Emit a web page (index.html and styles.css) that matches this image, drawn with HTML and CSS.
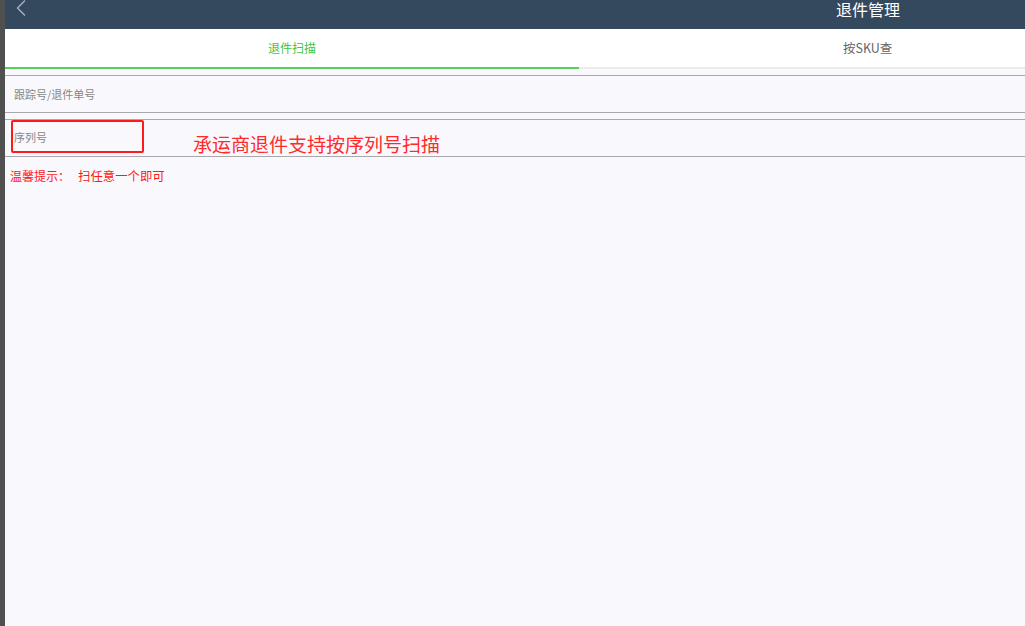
FILE: index.html
```html
<!DOCTYPE html>
<html lang="zh-CN">
<head>
    <meta charset="UTF-8">
    <meta name="viewport" content="width=device-width, initial-scale=1.0">
    <title>退件管理</title>
    <link rel="stylesheet" href="styles.css">
</head>
<body>

<div class="side"></div>

<div class="app">
    <!-- 顶部标题栏 -->
    <div class="header">
        <svg class="back" width="12" height="18" viewBox="0 0 12 18">
            <polyline points="9,0.5 1.5,8 9,15.5" fill="none" stroke="#a9b2bc" stroke-width="1.4"/>
        </svg>
        <div class="title">退件管理</div>
    </div>

    <!-- 标签页 -->
    <div class="tabs">
        <div class="tab active">退件扫描</div>
        <div class="tab tab-sku">按SKU查</div>
    </div>

    <!-- 扫描输入 -->
    <div class="field">
        <span class="placeholder">跟踪号/退件单号</span>
    </div>

    <div class="field field-serial">
        <div class="serial-box">
            <span class="placeholder">序列号</span>
        </div>
        <div class="note">承运商退件支持按序列号扫描</div>
    </div>

    <p class="tip">温馨提示：<span class="tip-text">扫任意一个即可</span></p>
</div>

</body>
</html>
```

FILE: styles.css
```css
html, body {
    height: 100%;
}
body {
    margin: 0;
    display: flex;
    overflow: hidden;
    font-family: "Noto Sans CJK SC", "Noto Sans", sans-serif;
    background-color: #f9f8fd;
}
.side {
    width: 5px;
    flex-shrink: 0;
    background-color: #505050;
}
.app {
    flex: 1;
    min-width: 0;
    background-color: #f9f8fd;
}
.header {
    height: 29px;
    display: flex;
    align-items: flex-start;
    background-color: #34495e;
}
.back {
    margin-left: 11px;
}
.title {
    margin-left: 808px;
    color: #ffffff;
    font-size: 16px;
    line-height: 18px;
}
.tabs {
    display: flex;
    height: 38px;
    background-color: #ffffff;
    border-bottom: 2px solid #ececec;
    margin-bottom: 6px;
}
.tab {
    font-size: 12px;
    line-height: 38px;
    color: #666666;
}
.tab.active {
    width: 574px;
    text-align: center;
    color: #3fc43f;
    border-bottom: 2px solid #55d155;
    margin-bottom: -2px;
}
.tab-sku {
    padding-left: 264px;
    font-size: 12.5px;
}
.field {
    height: 36px;
    display: flex;
    align-items: center;
    padding-left: 9px;
    border-top: 1px solid #a8a8ab;
    border-bottom: 1px solid #a8a8ab;
}
.placeholder {
    font-size: 11px;
    color: #888888;
}
.field-serial {
    margin-top: 6px;
    padding-left: 6px;
    align-items: flex-start;
}
.serial-box {
    width: 128px;
    height: 29px;
    border: 2px solid #ff1a1a;
    border-radius: 2px;
    display: flex;
    align-items: center;
    padding-left: 1px;
}
.note {
    margin-left: 49px;
    margin-top: 12px;
    font-size: 19px;
    line-height: 23px;
    color: #ff2a2a;
}
.tip {
    margin: 11px 0 0 5px;
    font-size: 12px;
    line-height: 16px;
    color: #ff1a1a;
}
.tip-text {
    margin-left: 8px;
    font-size: 12.4px;
}
```
